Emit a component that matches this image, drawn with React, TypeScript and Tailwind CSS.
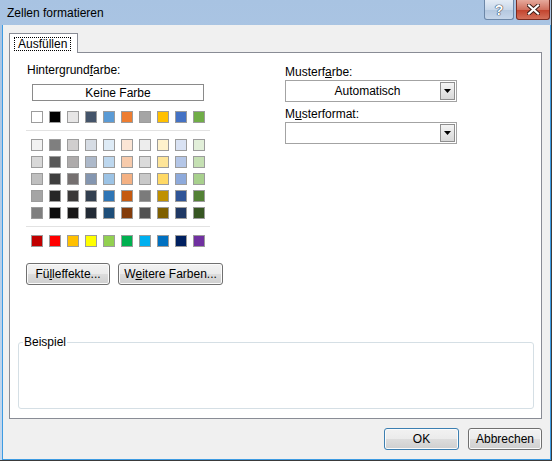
const themeTop = [
  "bg-[#ffffff]",
  "bg-[#000000]",
  "bg-[#e7e6e6]",
  "bg-[#44546a]",
  "bg-[#5b9bd5]",
  "bg-[#ed7d31]",
  "bg-[#a5a5a5]",
  "bg-[#ffc000]",
  "bg-[#4472c4]",
  "bg-[#70ad47]",
];

const themeShades = [
  "bg-[#f2f2f2]", "bg-[#7f7f7f]", "bg-[#d0cece]", "bg-[#d6dce4]", "bg-[#deebf6]", "bg-[#fbe5d5]", "bg-[#ededed]", "bg-[#fff2cc]", "bg-[#d9e2f3]", "bg-[#e2efd9]",
  "bg-[#d8d8d8]", "bg-[#595959]", "bg-[#aeabab]", "bg-[#adb9ca]", "bg-[#bdd7ee]", "bg-[#f7cbac]", "bg-[#dbdbdb]", "bg-[#fee599]", "bg-[#b4c6e7]", "bg-[#c5e0b3]",
  "bg-[#bfbfbf]", "bg-[#3f3f3f]", "bg-[#757070]", "bg-[#8496b0]", "bg-[#9cc3e5]", "bg-[#f4b183]", "bg-[#c9c9c9]", "bg-[#ffd965]", "bg-[#8eaadb]", "bg-[#a8d08d]",
  "bg-[#a5a5a5]", "bg-[#262626]", "bg-[#3a3838]", "bg-[#323f4f]", "bg-[#2e75b5]", "bg-[#c55a11]", "bg-[#7b7b7b]", "bg-[#bf9000]", "bg-[#2f5496]", "bg-[#538135]",
  "bg-[#7f7f7f]", "bg-[#0c0c0c]", "bg-[#171616]", "bg-[#222a35]", "bg-[#1e4e79]", "bg-[#833c0b]", "bg-[#525252]", "bg-[#7f6000]", "bg-[#1f3864]", "bg-[#375623]",
];

const standard = [
  "bg-[#c00000]",
  "bg-[#ff0000]",
  "bg-[#ffc000]",
  "bg-[#ffff00]",
  "bg-[#92d050]",
  "bg-[#00b050]",
  "bg-[#00b0f0]",
  "bg-[#0070c0]",
  "bg-[#002060]",
  "bg-[#7030a0]",
];

const btn =
  "h-[22px] shrink-0 rounded-[3px] border bg-[linear-gradient(to_bottom,#f2f2f2_0%,#ebebeb_50%,#dddddd_50%,#cfcfcf_100%)] shadow-[inset_0_0_0_1px_#fbfbfb] flex items-center justify-center";

function Swatches({ colors, rowGap }: { colors: string[]; rowGap?: boolean }) {
  return (
    <div className={`ml-[5px] grid grid-cols-10 gap-x-[6px] ${rowGap ? "gap-y-[5px]" : ""} w-[174px]`}>
      {colors.map((c, i) => (
        <div key={i} className={`h-[12px] w-[12px] border border-[#9c9c9c] ${c}`} />
      ))}
    </div>
  );
}

function Dropdown({ value }: { value?: string }) {
  return (
    <div className="flex h-[22px] w-[172px] items-stretch border border-[#a3a3a3] bg-white">
      <div className="flex flex-1 items-center justify-center pl-[10px]">{value}</div>
      <div className="m-[1px] flex w-[15px] items-center justify-center border border-[#8e8e8e] bg-[linear-gradient(to_bottom,#f4f4f4,#d8d8d8)]">
        <svg width="7" height="4" viewBox="0 0 7 4">
          <path d="M0 0h7L3.5 4z" fill="#000" />
        </svg>
      </div>
    </div>
  );
}

export default function App() {
  return (
    <div className="flex h-[461px] w-[552px] flex-col border-b border-r border-[#3a3a3a] bg-[linear-gradient(to_bottom,#a8c3e2,#c4d8ee)] font-['Liberation_Sans',Arial,sans-serif] text-[12px] leading-[14px] text-black">
      {/* title bar */}
      <div className="flex h-[25px] items-start pr-[1px]">
        <div className="mt-[6px] flex-1 pl-[7px] text-[12px]">Zellen formatieren</div>
        <div className="flex gap-[2px]">
          <div className="flex h-[20px] w-[30px] items-center justify-center rounded-b-[3px] border border-t-0 border-[#6c87a8] bg-[linear-gradient(to_bottom,#e4ecf6,#c9d8ea_50%,#b3c7df_51%,#c6d6ea)]">
            <span className="text-[14px] font-bold text-white [text-shadow:0_0_1px_#2c3e55,0_0_1px_#2c3e55,0_0_1px_#2c3e55]">?</span>
          </div>
          <div className="flex h-[20px] w-[34px] items-center justify-center rounded-b-[3px] border border-t-0 border-[#7b2b20] bg-[linear-gradient(to_bottom,#e6a99c,#d0715f_50%,#c2412b_51%,#d3705a)]">
            <svg width="13" height="11" viewBox="0 0 13 11">
              <path d="M2 1.5l9 8M11 1.5l-9 8" stroke="#3b1a14" strokeWidth="4" strokeLinecap="square" />
              <path d="M2 1.5l9 8M11 1.5l-9 8" stroke="#fff" strokeWidth="2.2" strokeLinecap="square" />
            </svg>
          </div>
        </div>
      </div>

      {/* client area */}
      <div className="ml-[2px] flex flex-1 flex-col border-b border-l border-r border-[#3d9be2] bg-[#f0f0f0] pl-[6px] pr-[8px]">
        <div className="mt-[8px] flex">
          <div className="relative z-10 -mb-px flex h-[20px] w-[69px] items-start border border-b-0 border-[#898c95] bg-white pl-[4px] pt-[3px]">
            <span className="border border-dotted border-black px-[3px] leading-[12px]">Ausfüllen</span>
          </div>
        </div>

        <div className="flex h-[367px] flex-col border border-[#898c95] bg-white">
          <div className="flex">
            {/* left column */}
            <div className="flex w-[200px] shrink-0 flex-col pl-[16px]">
              <div className="mt-[10px] pl-[1px]">
                Hintergrund<span className="underline">f</span>arbe:
              </div>
              <div className="ml-[6px] mt-[7px] flex h-[17px] w-[172px] items-center justify-center border border-[#8a8a8a] bg-white">
                Keine Farbe
              </div>
              <div className="mt-[10px]">
                <Swatches colors={themeTop} />
              </div>
              <div className="mt-[7px] h-px w-[184px] bg-[#e2e2e2]" />
              <div className="mt-[8px]">
                <Swatches colors={themeShades} rowGap />
              </div>
              <div className="mt-[7px] h-px w-[184px] bg-[#e2e2e2]" />
              <div className="mt-[8px]">
                <Swatches colors={standard} />
              </div>
              <div className="mt-[16px] flex gap-[8px]">
                <div className={`${btn} w-[84px] border-[#707070]`}>
                  Fü<span className="underline">l</span>leffekte...
                </div>
                <div className={`${btn} w-[105px] border-[#707070]`}>
                  W<span className="underline">e</span>itere Farben...
                </div>
              </div>
            </div>

            {/* right column */}
            <div className="ml-[75px] flex flex-col">
              <div className="mt-[12px]">
                Muster<span>f</span>
                <span className="underline">a</span>rbe:
              </div>
              <div className="mt-[1px]">
                <Dropdown value="Automatisch" />
              </div>
              <div className="mt-[5px]">
                M<span className="underline">u</span>sterformat:
              </div>
              <div className="mt-[1px]">
                <Dropdown />
              </div>
            </div>
          </div>

          <div className="relative mb-[9px] ml-[8px] mr-[7px] mt-auto h-[67px] rounded-[3px] border border-[#d5dfe5]">
            <span className="absolute left-[4px] top-[-8px] bg-white px-[1px]">Beispiel</span>
          </div>
        </div>

        <div className="mt-[9px] flex justify-end gap-[9px]">
          <div className={`${btn} w-[75px] border-[#3c7fb1] shadow-[inset_0_0_0_1px_#9fd8f4]`}>OK</div>
          <div className={`${btn} w-[74px] border-[#707070]`}>Abbrechen</div>
        </div>
      </div>
    </div>
  );
}
